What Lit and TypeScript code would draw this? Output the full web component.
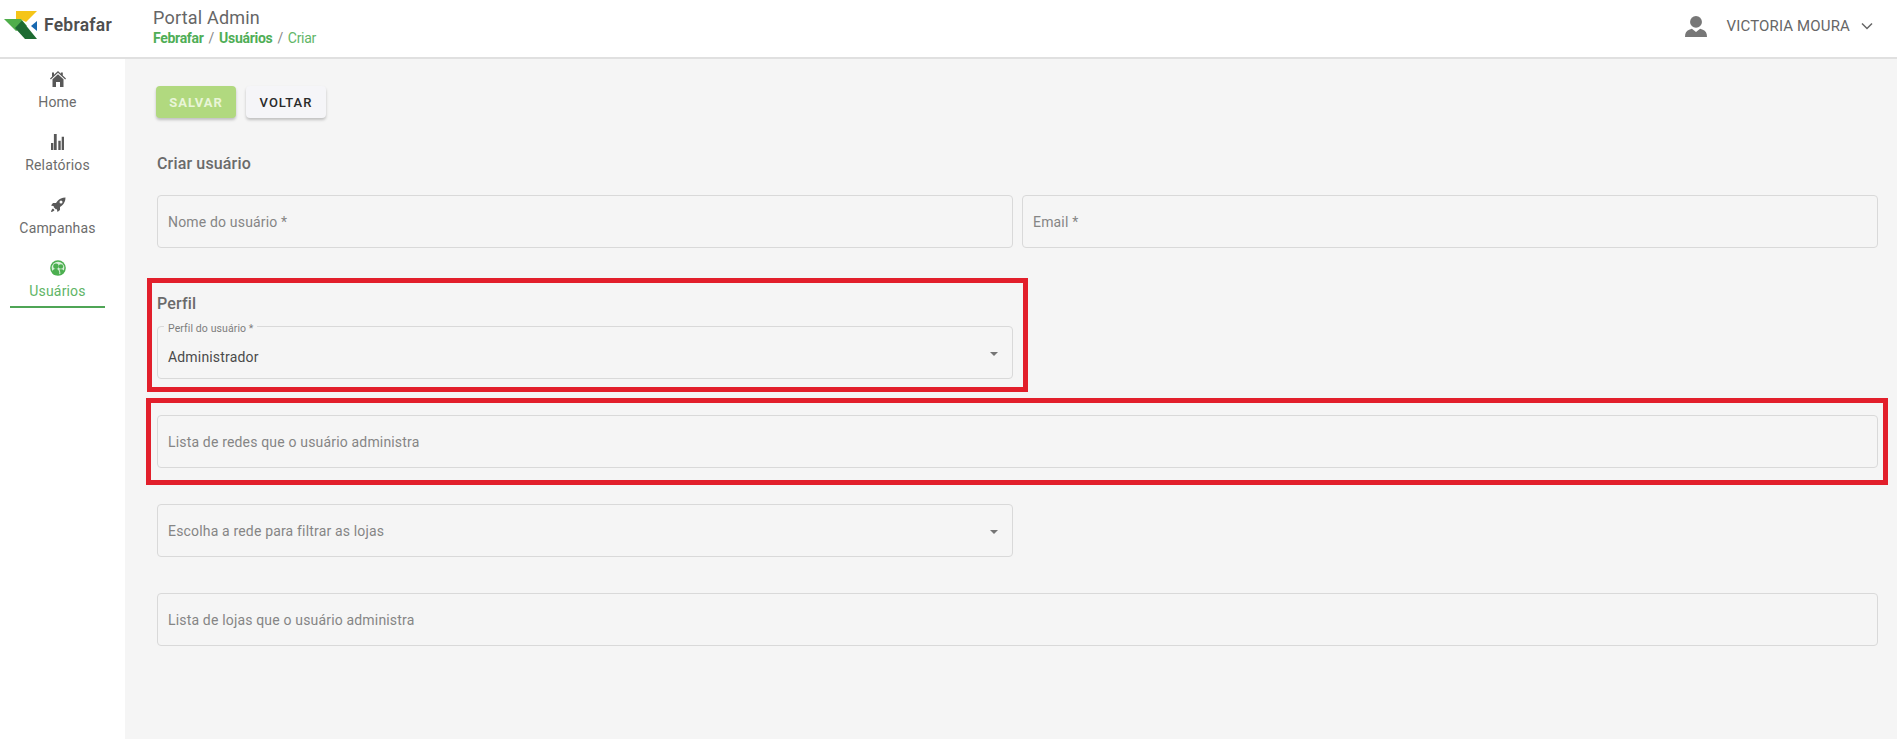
import { LitElement, html, css, svg } from "lit";
import { customElement } from "lit/decorators.js";

const nav = [
  { label: "Home", icon: svg`<path d="M8 0 0 7.600l.8.8L8 1.800l7.200 6.600.8-.8L12.800 4.600V1.500h-2v1.300zM2.500 8.300 8 3.300l5.500 5V16H10v-5H6v5H2.500z"/><path d="M2 1.500h2v3l-2 2z"/>` },
  { label: "Relatórios", icon: svg`<path d="M1 9h2.300v7H1zM3.900 0h2.800v16H3.900zM8.300 6.700h2.400V16H8.300zM11.700 2.700H14V16h-2.300z"/>` },
  { label: "Campanhas", icon: svg`<path d="M15.500.5c-3.500 0-6 1.300-8 3.500L6 6H3L1 8.500l3 .7-.4.8 2.400 2.400.8-.4.7 3 2.500-2v-3l2-1.500c2.200-2 3.500-4.500 3.500-8zM11 6.500a1.500 1.500 0 1 1 0-3 1.500 1.500 0 0 1 0 3zM3 11.500c-1 .5-1.700 1.700-2 3.500 1.800-.3 3-1 3.500-2z"/>` },
  { label: "Usuários", active: true, icon: svg`<circle cx="8" cy="8" r="7.800"/><circle cx="8" cy="8" r="6.300" fill="#d9efda"/><circle cx="6" cy="6.200" r="2.700"/><path d="M1.800 12.500c.6-2.300 2-3.200 3-3.500h2c1 .3 2.200 1.200 2.500 3.500l-.2 2.500H4z"/><circle cx="10.900" cy="6.500" r="2.300"/><path d="M10.200 9.300h1.600c1 .2 2 1 2.600 2.500L12 14.500h-1.600c0-2-.1-3.800-1.200-4.700z"/>` },
];

@customElement("app-root")
export class AppRoot extends LitElement {
  static styles = css`
    :host { display: block; height: 739px; overflow: hidden; position: relative; font-family: Roboto, "Liberation Sans", sans-serif; background: #f5f5f5; color: #666; }
    * { box-sizing: border-box; }
    .header { height: 59px; background: #fff; border-bottom: 2px solid #e0e0e0; display: flex; align-items: center; }
    .logo { width: 153px; display: flex; align-items: center; padding-left: 4px; gap: 6px; font-size: 17.500px; font-weight: 600; color: #4f4f4f; letter-spacing: .25px; margin-top: -7px; }
    .logo svg { display: block; flex: none; }
    .title { display: flex; flex-direction: column; margin-top: -6px; }
    .title .t { font-size: 18px; line-height: 24px; color: #666; letter-spacing: .2px; }
    .crumbs { font-size: 14px; line-height: 16px; color: #61b667; display: flex; gap: 5px; letter-spacing: -.3px; }
    .crumbs b { font-weight: 700; color: #4fae56; }
    .crumbs i { font-style: normal; color: #888; }
    .user { margin-left: auto; display: flex; align-items: center; padding-right: 24px; color: #666; font-size: 15px; letter-spacing: .15px; margin-top: -5px; }
    .user svg { display: block; }
    .user .name { margin-left: 20px; margin-right: 11px; }
    .body { display: flex; height: 680px; }
    .side { width: 125px; background: #fff; padding: 12px 20px 0 10px; flex: none; }
    .nav { height: 63px; display: flex; flex-direction: column; align-items: center; font-size: 14px; letter-spacing: .17px; color: #6c6c6c; }
    .nav svg { display: block; margin-bottom: 7px; fill: #585858; flex: none; }
    .nav.active { color: #60b566; border-bottom: 2px solid #4fa556; height: 48px; }
    .nav.active svg { fill: #4caf50; }
    .nav span { line-height: 17px; }
    .main { flex: 1; padding: 27px 19px 0 32px; }
    .btns { display: flex; gap: 10px; margin-left: -1px; }
    .btn { width: 80px; height: 32px; border-radius: 4px; display: flex; align-items: center; justify-content: center; font-size: 13px; font-weight: 500; letter-spacing: 1px; box-shadow: 0 2px 3px rgba(0,0,0,.22); }
    .save { background: #b1d97f; color: #e9f5d8; font-weight: 700; }
    .back { background: #f5f5f8; color: #2a2a2a; }
    h2 { margin: 0; font-size: 16px; font-weight: 500; letter-spacing: .15px; color: #6a6a6a; line-height: 20px; }
    .h1 { margin-top: 36px; }
    .h-perfil { margin-top: 46px; }
    .row { display: flex; gap: 9px; }
    .field { position: relative; height: 53px; flex: 1; border: 1px solid #d9d9d9; border-radius: 4px; display: flex; align-items: center; padding: 0 10px; font-size: 14px; letter-spacing: .17px; color: #858585; min-width: 0; }
    .half { width: 856px; flex: none; }
    .caret { position: absolute; right: 14px; top: 25px; width: 0; height: 0; border-left: 4px solid transparent; border-right: 4px solid transparent; border-top: 4px solid #757575; }
    .float { position: absolute; left: 6px; top: -4px; padding: 0 4px; background: #f5f5f5; font-size: 10.500px; letter-spacing: .1px; line-height: 12px; color: #7d7d7d; }
    .val { color: #4a4a4a; margin-top: 9px; }
    .mt-names { margin-top: 21px; }
    .mt-perfil { margin-top: 12px; }
    .mt-redes { margin-top: 36px; }
    .mt-rede { margin-top: 36px; }
    .mt-lojas { margin-top: 36px; }
    .mark { position: absolute; border: 5px solid #e21f2b; pointer-events: none; }
    .m1 { left: 147px; top: 278px; width: 881px; height: 114px; }
    .m2 { left: 146px; top: 398px; width: 1742px; height: 87px; }
  `;

  render() {
    return html`
      <div class="header">
        <div class="logo">
          <svg width="34" height="30" viewBox="4 9 34 30">
            <path d="M16 10h21L26 21l-6-3h-4z" fill="#f5c518"/>
            <path d="M4 18h17l6 7-11 5z" fill="#4fae4a"/>
            <path d="M22 19.500 37 38H25L15 27z" fill="#1d6b32"/>
            <path d="M37 20l-6 5 6 5z" fill="#1768b0"/>
          </svg>
          <span>Febrafar</span>
        </div>
        <div class="title">
          <span class="t">Portal Admin</span>
          <span class="crumbs"><b>Febrafar</b><i>/</i><b>Usuários</b><i>/</i><span>Criar</span></span>
        </div>
        <div class="user">
          <svg width="22" height="22" viewBox="0 0 24 24" fill="#777"><circle cx="12" cy="7.500" r="6.500"/><path d="M0 24c0-4.500 1.500-7 4.500-8l3-1 4.500 3.500 4.500-3.500 3 1c3 1 4.500 3.500 4.500 8z"/></svg>
          <span class="name">VICTORIA MOURA</span>
          <svg width="12" height="8" viewBox="0 0 12 8" fill="none" stroke="#666" stroke-width="1.500"><path d="M1 1.500 6 6.500l5-5"/></svg>
        </div>
      </div>
      <div class="body">
        <div class="side">
          ${nav.map((n) => html`
            <div class="nav ${n.active ? "active" : ""}">
              <svg width="16" height="16" viewBox="0 0 16 16">${n.icon}</svg>
              <span>${n.label}</span>
            </div>`)}
        </div>
        <div class="main">
          <div class="btns">
            <div class="btn save">SALVAR</div>
            <div class="btn back">VOLTAR</div>
          </div>
          <h2 class="h1">Criar usuário</h2>
          <div class="row mt-names">
            <div class="field">Nome do usuário *</div>
            <div class="field">Email *</div>
          </div>
          <h2 class="h-perfil">Perfil</h2>
          <div class="field half mt-perfil">
            <span class="float">Perfil do usuário *</span>
            <span class="val">Administrador</span>
            <span class="caret"></span>
          </div>
          <div class="field mt-redes">Lista de redes que o usuário administra</div>
          <div class="field half mt-rede">Escolha a rede para filtrar as lojas<span class="caret"></span></div>
          <div class="field mt-lojas">Lista de lojas que o usuário administra</div>
        </div>
      </div>
      <div class="mark m1"></div>
      <div class="mark m2"></div>
    `;
  }
}
